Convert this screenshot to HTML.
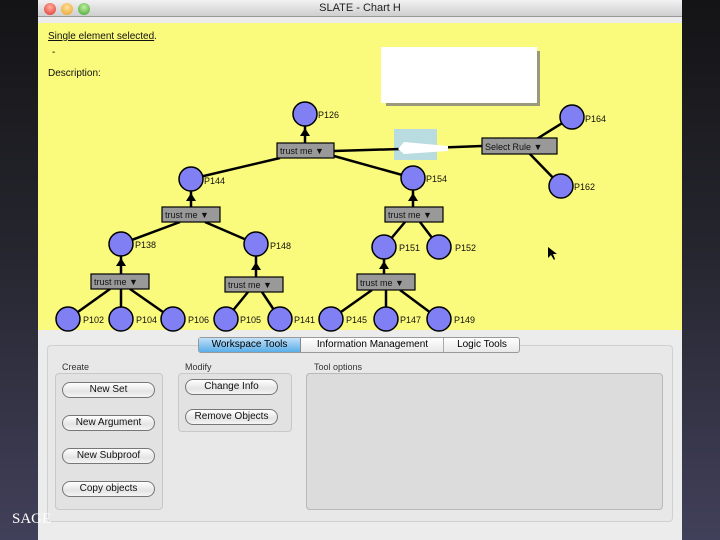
<!DOCTYPE html>
<html><head><meta charset="utf-8"><style>
*{margin:0;padding:0;box-sizing:border-box}
body{width:720px;height:540px;overflow:hidden;position:relative;font-family:"Liberation Sans",sans-serif;background:linear-gradient(180deg,#141416 0%,#25252e 45%,#41405a 100%)}
.abs{position:absolute}
#win{left:38px;top:0;width:644px;height:540px;background:#ececec}
#title{left:0;top:0;width:644px;height:17px;background:linear-gradient(#f1f1f1,#cfcfcf);border-bottom:1px solid #999;font-size:11px;text-align:center;line-height:17px;color:#222}
.dot{width:12px;height:12px;border-radius:50%;top:3px}
#yellow{left:0;top:23px;width:644px;height:307px;background:#fafa7c}
.btn{position:absolute;width:93px;height:16px;border:1px solid #777;border-radius:8px;background:linear-gradient(#fff,#e4e4e4 60%,#f4f4f4);font-size:10px;text-align:center;line-height:14px;color:#111}
.grp{position:absolute;border:1px solid #c8c8c8;border-radius:4px;background:#e2e2e2}
.lbl{position:absolute;font-size:9px;color:#333}
</style></head><body>
<div id="win" class="abs">
 <div id="title" class="abs">SLATE - Chart H</div>
 <div class="abs dot" style="left:6px;background:radial-gradient(circle at 50% 35%,#ffb0a0,#e0302a)"></div>
 <div class="abs dot" style="left:23px;background:radial-gradient(circle at 50% 35%,#ffe0a0,#e8a020)"></div>
 <div class="abs dot" style="left:40px;background:radial-gradient(circle at 50% 35%,#c0f0a0,#40a030)"></div>
 <div id="yellow" class="abs"></div>
 <div class="abs" style="left:10px;top:31px;font-size:10px;text-decoration:underline;color:#111">Single element selected</div><div class="abs" style="left:116px;top:31px;font-size:10px">.</div>
 <div class="abs" style="left:14px;top:47px;font-size:10px">-</div>
 <div class="abs" style="left:10px;top:68px;font-size:10px;color:#111">Description:</div>
 <!-- bottom panel -->
 <div class="grp" style="left:9px;top:345px;width:626px;height:177px;background:#e8e8e8;border-color:#d0d0d0"></div>
 <div class="abs" style="left:160px;top:337px;width:322px;height:16px;border:1px solid #999;border-radius:3px;background:linear-gradient(#fff,#e8e8e8);font-size:10px;line-height:14px">
  <div class="abs" style="left:0;top:0;width:102px;height:14px;background:linear-gradient(#bfe0fa,#5aaee8);text-align:center;border-right:1px solid #888">Workspace Tools</div>
  <div class="abs" style="left:103px;top:0;width:142px;text-align:center;border-right:1px solid #aaa">Information Management</div>
  <div class="abs" style="left:246px;top:0;width:74px;text-align:center">Logic Tools</div>
 </div>
 <div class="lbl" style="left:24px;top:362px">Create</div>
 <div class="lbl" style="left:147px;top:362px">Modify</div>
 <div class="lbl" style="left:276px;top:362px">Tool options</div>
 <div class="grp" style="left:17px;top:373px;width:108px;height:137px"></div>
 <div class="grp" style="left:140px;top:373px;width:114px;height:59px"></div>
 <div class="grp" style="left:268px;top:373px;width:256px;height:137px;border-color:#b8b8b8;background:#dcdcdc"></div>
 <div class="btn" style="left:24px;top:382px">New Set</div>
 <div class="btn" style="left:24px;top:415px">New Argument</div>
 <div class="btn" style="left:24px;top:448px">New Subproof</div>
 <div class="btn" style="left:24px;top:481px">Copy objects</div>
 <div class="btn" style="left:147px;top:379px">Change Info</div>
 <div class="btn" style="left:147px;top:409px">Remove Objects</div>
 <div class="grp" style="left:268px;top:373px;width:357px;height:137px;border-color:#b8b8b8;background:#dcdcdc"></div>
</div>
<div class="abs" style="left:12px;top:511px;font-size:15px;color:#fff;font-family:'Liberation Serif',serif">SAGE</div>
<svg class="abs" style="left:0;top:0" width="720" height="540" font-family="Liberation Sans" font-size="9">
 <rect x="386" y="51" width="154" height="55" fill="#9a9a7a"/>
 <rect x="381" y="47" width="156" height="56" fill="#fff"/>
 <rect x="394" y="129" width="43" height="31" fill="#b8dce0"/>
 <g stroke="#000" stroke-width="2.5" fill="none">
  <line x1="305" y1="114" x2="305" y2="150"/>
  <line x1="191" y1="179" x2="280" y2="158"/>
  <line x1="413" y1="178" x2="334" y2="156"/>
  <line x1="334" y1="151" x2="400" y2="149"/>
  <line x1="430" y1="148" x2="482" y2="146"/>
  <line x1="572" y1="117" x2="535" y2="140"/>
  <line x1="561" y1="186" x2="528" y2="152"/>
  <line x1="191" y1="179" x2="191" y2="214"/>
  <line x1="413" y1="178" x2="413" y2="214"/>
  <line x1="121" y1="244" x2="180" y2="222"/>
  <line x1="256" y1="244" x2="205" y2="222"/>
  <line x1="384" y1="247" x2="405" y2="222"/>
  <line x1="439" y1="247" x2="420" y2="222"/>
  <line x1="121" y1="244" x2="121" y2="280"/>
  <line x1="256" y1="244" x2="256" y2="284"/>
  <line x1="384" y1="247" x2="384" y2="282"/>
  <line x1="68" y1="319" x2="110" y2="289"/><line x1="121" y1="319" x2="121" y2="289"/><line x1="173" y1="319" x2="130" y2="289"/>
  <line x1="226" y1="319" x2="248" y2="292"/><line x1="280" y1="319" x2="262" y2="292"/>
  <line x1="331" y1="319" x2="372" y2="290"/><line x1="386" y1="319" x2="386" y2="290"/><line x1="439" y1="319" x2="400" y2="290"/>
 </g>
 <path d="M398 149 L404 142 L448 146 L448 151 L404 154 Z" fill="#fff"/>
 <g fill="#000">
  <path d="M300 136 L305 128 L310 136Z"/><path d="M186 201 L191 193 L196 201Z"/><path d="M408 201 L413 193 L418 201Z"/>
  <path d="M116 266 L121 258 L126 266Z"/><path d="M251 270 L256 262 L261 270Z"/><path d="M379 269 L384 261 L389 269Z"/>
 </g>
 <g fill="#8080f4" stroke="#000" stroke-width="1.5">
  <circle cx="305" cy="114" r="12"/><circle cx="572" cy="117" r="12"/><circle cx="191" cy="179" r="12"/><circle cx="413" cy="178" r="12"/><circle cx="561" cy="186" r="12"/>
  <circle cx="121" cy="244" r="12"/><circle cx="256" cy="244" r="12"/><circle cx="384" cy="247" r="12"/><circle cx="439" cy="247" r="12"/>
  <circle cx="68" cy="319" r="12"/><circle cx="121" cy="319" r="12"/><circle cx="173" cy="319" r="12"/><circle cx="226" cy="319" r="12"/><circle cx="280" cy="319" r="12"/><circle cx="331" cy="319" r="12"/><circle cx="386" cy="319" r="12"/><circle cx="439" cy="319" r="12"/>
 </g>
 <g fill="#999" stroke="#000" stroke-width="1.2">
  <rect x="277" y="143" width="57" height="15"/><rect x="482" y="138" width="75" height="16"/>
  <rect x="162" y="207" width="58" height="15"/><rect x="385" y="207" width="58" height="15"/>
  <rect x="91" y="274" width="58" height="15"/><rect x="225" y="277" width="58" height="15"/><rect x="357" y="274" width="58" height="16"/>
 </g>
 <g fill="#111">
  <text x="280" y="154">trust me ▼</text><text x="485" y="150">Select Rule ▼</text>
  <text x="165" y="218">trust me ▼</text><text x="388" y="218">trust me ▼</text>
  <text x="94" y="285">trust me ▼</text><text x="228" y="288">trust me ▼</text><text x="360" y="286">trust me ▼</text>
  <text x="318" y="118">P126</text><text x="585" y="122">P164</text><text x="204" y="184">P144</text><text x="426" y="182">P154</text><text x="574" y="190">P162</text>
  <text x="135" y="248">P138</text><text x="270" y="249">P148</text><text x="399" y="251">P151</text><text x="455" y="251">P152</text>
  <text x="83" y="323">P102</text><text x="136" y="323">P104</text><text x="188" y="323">P106</text><text x="240" y="323">P105</text><text x="294" y="323">P141</text><text x="346" y="323">P145</text><text x="400" y="323">P147</text><text x="454" y="323">P149</text>
 </g>
 <path d="M548 247 L548 258 L551 255 L554 260 L555 259 L553 254 L557 254 Z" fill="#000"/>
</svg>
</body></html>
